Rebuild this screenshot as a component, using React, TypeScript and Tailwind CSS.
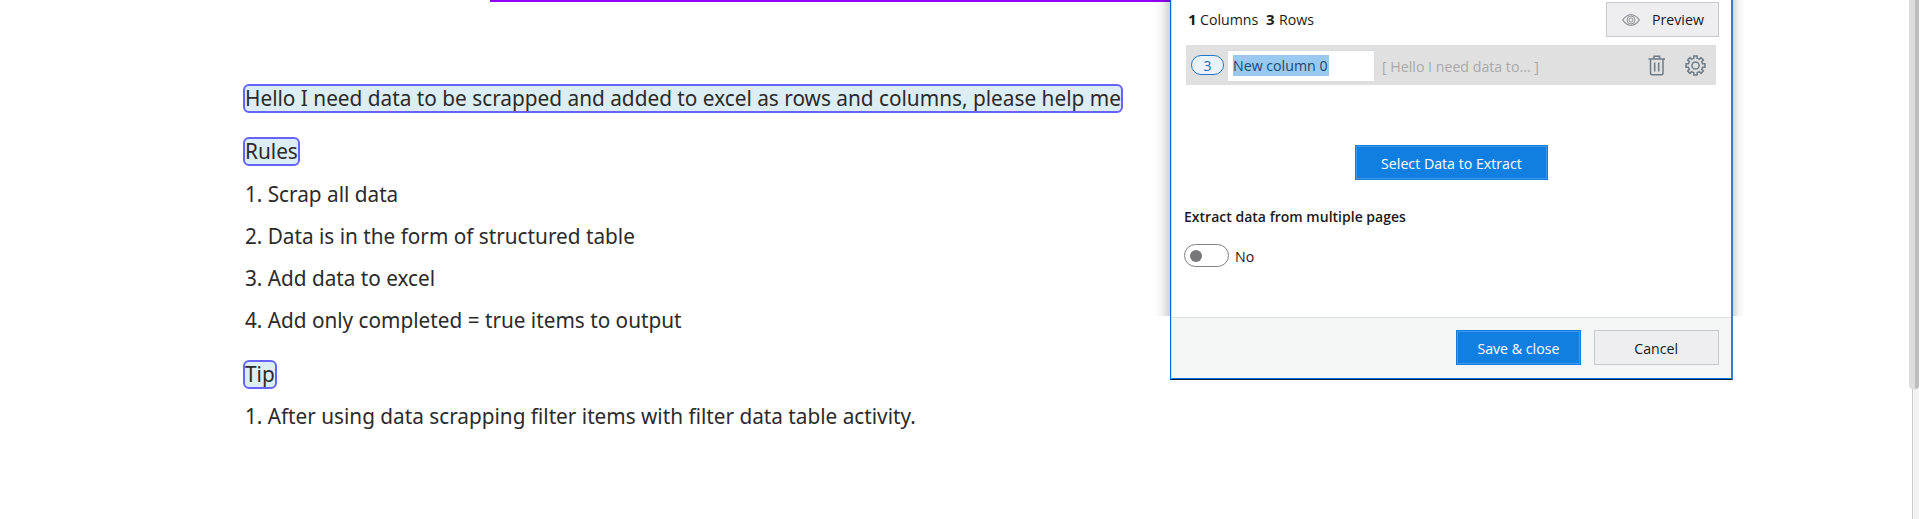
import type { ReactNode } from "react";

function Marked({ width, children }: { width: string; children: ReactNode }) {
  return (
    <div className={`h-[29px] rounded-[6px] border-2 border-[#6563fb] bg-[#dcedf3] ${width}`}>
      <span className="block origin-left scale-x-[0.945] whitespace-nowrap leading-[23px]">{children}</span>
    </div>
  );
}

function Row({ children }: { children: ReactNode }) {
  return (
    <li className="h-[42px] origin-left scale-x-[0.943] whitespace-nowrap pl-0.5 leading-[42px]">{children}</li>
  );
}

function Label({ className = "", children }: { className?: string; children: ReactNode }) {
  return <span className={`inline-block scale-x-[0.945] whitespace-nowrap ${className}`}>{children}</span>;
}

function EyeIcon() {
  return (
    <svg width="18" height="12" viewBox="0 0 18 12" fill="none" stroke="#85888e" strokeWidth="1.100">
      <path d="M.7 6C3 2.600 5.800.7 9 .7S15 2.600 17.300 6C15 9.400 12.200 11.300 9 11.300S3 9.400.7 6Z" />
      <circle cx="9" cy="6" r="4" strokeWidth="0.900" />
      <circle cx="9" cy="6" r="2" strokeWidth="0.900" />
    </svg>
  );
}

function TrashIcon() {
  return (
    <svg width="18" height="21" viewBox="0 0 18 21" fill="none" stroke="#6d7b86" strokeWidth="1.500">
      <path d="M.5 4H17M6 3.800V1.300H11.500V3.800M2.500 4V18.200Q2.500 19.700 4 19.700H13.500Q15 19.700 15 18.200V4M6.700 7.500V16.500M10.700 7.500V16.500" />
    </svg>
  );
}

const teeth = Array.from({ length: 8 }, (_, i) => {
  const pt = (r: number, deg: number) => {
    const a = ((i * 45 + deg - 90) * Math.PI) / 180;
    return `${(10.5 + r * Math.cos(a)).toFixed(2)} ${(10.5 + r * Math.sin(a)).toFixed(2)}`;
  };
  return `${i === 0 ? "M" : "L"}${pt(7.3, -13)}L${pt(9.6, -10)}L${pt(9.6, 10)}L${pt(7.3, 13)}A7.3 7.3 0 0 1 ${pt(7.3, 32)}`;
}).join("");

function GearIcon() {
  return (
    <svg width="21" height="21" viewBox="0 0 21 21" fill="none" stroke="#6d7b86" strokeWidth="1.500">
      <path d={`${teeth}Z`} />
      <circle cx="10.500" cy="10.500" r="3.600" />
    </svg>
  );
}

function Document() {
  return (
    <main className="w-[1170px] font-['Noto_Sans',sans-serif] text-[22px] text-[#2b2b2b]">
      <div className="ml-[490px] h-0.5 bg-[#9100f5]" />
      <div className="pl-[243px] pt-[82px]">
        <Marked width="w-[880px]">
          Hello I need data to be scrapped and added to excel as rows and columns, please help me
        </Marked>
        <div className="h-6" />
        <Marked width="w-[57px]">Rules</Marked>
        <ol className="pt-1.5">
          <Row>1. Scrap all data</Row>
          <Row>2. Data is in the form of structured table</Row>
          <Row>3. Add data to excel</Row>
          <Row>4. Add only completed = true items to output</Row>
        </ol>
        <div className="h-5" />
        <Marked width="w-[34px]">Tip</Marked>
        <ol className="pt-[5px]">
          <Row>1. After using data scrapping filter items with filter data table activity.</Row>
        </ol>
      </div>
    </main>
  );
}

function Panel() {
  return (
    <aside className="relative flex h-[380px] w-[563px] flex-col font-['Open_Sans',sans-serif] text-[15px] text-[#1b1b1b]">
      <div className="absolute -left-4 top-0 h-[316px] w-4 bg-linear-to-r from-transparent via-black/5 to-black/18" />
      <div className="absolute -right-3 top-0 h-[316px] w-3 bg-linear-to-l from-transparent via-black/4 to-black/16" />
      <div className="flex grow flex-col border-b border-l border-r-2 border-b-[#0a1f3f] border-l-[#0069e0] border-r-[#3a7dc6] bg-white">
        <div className="flex h-[317px] flex-col border-l border-[#c5e0fa] pl-[14px]">
          <div className="flex h-[45px] items-start justify-between pr-3">
            <div className="flex pl-0.5 pt-[7px] leading-6">
              <b className="w-3">1</b>
              <Label className="w-[66px] origin-left">Columns</Label>
              <b className="w-[13px]">3</b>
              <Label className="origin-left">Rows</Label>
            </div>
            <button className="mt-0.5 flex h-[35px] w-[113px] items-center border border-[#c8c9cf] bg-[#eeeef1] pl-[15px]">
              <EyeIcon />
              <Label className="ml-3 origin-left">Preview</Label>
            </button>
          </div>
          <div className="flex h-10 w-[530px] items-center bg-[#e0e0e0] pl-[5px]">
            <div className="flex h-5 w-[33px] items-center justify-center rounded-full border border-[#2476cf] bg-[#eaf2fc] text-[14px] text-[#2a6bb3]">
              3
            </div>
            <div className="ml-[3px] mt-px flex h-8 w-[148px] items-center border border-[#d9dcdf] bg-white pl-[5px]">
              <div className="flex h-[21px] w-24 items-center bg-[#99c9ef] text-[#1d4a72]">
                <Label className="origin-left">New column 0</Label>
              </div>
            </div>
            <Label className="ml-[7px] mt-[3px] w-[170px] origin-left text-[#a9a9a9]">[ Hello I need data to... ]</Label>
            <div className="ml-auto flex items-center gap-[19px] pr-[10px]">
              <TrashIcon />
              <GearIcon />
            </div>
          </div>
          <button className="ml-[169px] mt-[60px] h-[35px] w-[193px] border border-[#117edf] bg-[#117fe2] text-white">
            <div className="flex h-full items-center justify-center border border-[#3e98e8] pt-0.5">
              <Label>Select Data to Extract</Label>
            </div>
          </button>
          <div className="mt-6 h-6 leading-6">
            <span className="-ml-0.5 inline-block origin-left scale-x-[0.935] whitespace-nowrap font-semibold">
              Extract data from multiple pages
            </span>
          </div>
          <div className="-ml-0.5 mt-4 flex items-center">
            <div className="flex h-[23px] w-[45px] items-center rounded-full border border-[#808080] pl-[5px]">
              <div className="size-3 rounded-full bg-[#77777a]" />
            </div>
            <Label className="ml-1.5 mt-px origin-left">No</Label>
          </div>
        </div>
        <footer className="flex grow justify-end gap-[13px] border-b border-l border-t border-b-[#0872e4] border-l-[#c5e0fa] border-t-[#e0e2e2] bg-[#f4f6f6] pr-3 pt-3">
          <button className="h-[35px] w-[125px] border border-[#117edf] bg-[#117fe2] text-white">
            <div className="flex h-full items-center justify-center border border-[#3e98e8] pt-0.5">
              <Label>Save &amp; close</Label>
            </div>
          </button>
          <button className="flex h-[35px] w-[125px] items-center justify-center border border-[#c8c9cf] bg-[#eeeef1] pt-0.5">
            <Label>Cancel</Label>
          </button>
        </footer>
      </div>
    </aside>
  );
}

function Scrollbar() {
  return (
    <div className="relative ml-auto mr-px h-full w-[7px] border-l border-[#cfcfcf] bg-[#f2f2f2]">
      <div className="absolute -left-1 top-0 flex h-[389px] w-2.5 overflow-hidden rounded-b-[4px]">
        <div className="w-1.5 bg-[#dddddd]" />
        <div className="w-1 bg-[#bdbdbd]" />
      </div>
    </div>
  );
}

export default function App() {
  return (
    <div className="flex h-[519px] w-[1920px] items-start overflow-hidden bg-white">
      <Document />
      <Panel />
      <Scrollbar />
    </div>
  );
}
